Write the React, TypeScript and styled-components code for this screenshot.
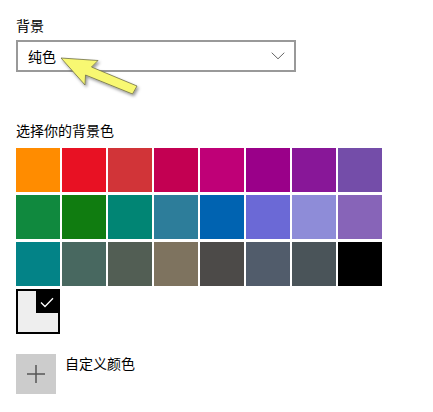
import React from "react";
import styled, { createGlobalStyle } from "styled-components";

const GlobalStyle = createGlobalStyle`
  html, body { margin: 0; padding: 0; background: #ffffff; }
  body { font-family: "Noto Sans CJK SC", "Noto Sans", sans-serif; color: #000; }
`;

const Page = styled.div`
  position: relative;
  width: 433px;
  height: 412px;
  box-sizing: border-box;
  padding: 15px 16px 0 16px;
  display: flex;
  flex-direction: column;
  overflow: hidden;
`;

const Label = styled.div<{ $top?: number }>`
  font-size: 14px;
  line-height: 20px;
  margin-top: ${(p) => p.$top ?? 0}px;
`;

const Select = styled.div`
  margin-top: 5px;
  width: 280px;
  height: 32px;
  box-sizing: border-box;
  border: 2px solid #999999;
  display: flex;
  align-items: center;
  justify-content: space-between;
  padding: 0 9px 0 10px;
  font-size: 14px;
  line-height: 20px;
`;

const Grid = styled.div`
  margin-top: 8px;
  display: grid;
  grid-template-columns: repeat(8, 44px);
  grid-auto-rows: 44px;
  column-gap: 2px;
  row-gap: 3px;
`;

const Swatch = styled.div<{ $c: string }>`
  background: ${(p) => p.$c};
`;

const Selected = styled.div`
  position: relative;
  box-sizing: border-box;
  height: 45px;
  border: 2px solid #000;
  background: #eeeeee;
`;

const CheckBox = styled.div`
  position: absolute;
  top: 0;
  right: 0;
  width: 22px;
  height: 22px;
  background: #000;
  display: flex;
  align-items: center;
  justify-content: center;
`;

const CustomRow = styled.div`
  margin-top: 21px;
  display: flex;
  align-items: flex-start;
  gap: 9px;
`;

const PlusButton = styled.div`
  width: 40px;
  height: 40px;
  background: #cccccc;
  display: flex;
  align-items: center;
  justify-content: center;
`;

const CustomText = styled.div`
  font-size: 14px;
  line-height: 20px;
  margin-top: -1px;
`;

const ArrowOverlay = styled.svg`
  position: absolute;
  left: 0;
  top: 0;
  width: 433px;
  height: 412px;
  pointer-events: none;
  overflow: visible;
`;

const colors = [
  "#FF8C00", "#E81123", "#D13438", "#C30052", "#BF0077", "#9A0089", "#881798", "#744DA9",
  "#10893E", "#107C10", "#018574", "#2D7D9A", "#0063B1", "#6B69D6", "#8E8CD8", "#8764B8",
  "#038387", "#486860", "#525E54", "#7E735F", "#4C4A48", "#515C6B", "#4A5459", "#000000",
];

export default function App() {
  return (
    <>
      <GlobalStyle />
      <Page>
        <Label>背景</Label>
        <Select>
          <span>纯色</span>
          <svg width="14" height="8" viewBox="0 0 14 8">
            <path d="M0.7 0.7 L7 6.8 L13.3 0.7" fill="none" stroke="#666" strokeWidth="1" />
          </svg>
        </Select>
        <Label $top={48}>选择你的背景色</Label>
        <Grid>
          {colors.map((c) => (
            <Swatch key={c} $c={c} />
          ))}
          <Selected>
            <CheckBox>
              <svg width="14" height="11" viewBox="0 0 14 11">
                <path d="M1 5.5 L5 9.5 L13 1.2" fill="none" stroke="#fff" strokeWidth="1.3" />
              </svg>
            </CheckBox>
          </Selected>
        </Grid>
        <CustomRow>
          <PlusButton>
            <svg width="18" height="18" viewBox="0 0 18 18">
              <path d="M9 0 V18 M0 9 H18" stroke="#555" strokeWidth="1.5" />
            </svg>
          </PlusButton>
          <CustomText>自定义颜色</CustomText>
        </CustomRow>
        <ArrowOverlay viewBox="0 0 433 412">
          <defs>
            <filter id="sh" x="-20%" y="-20%" width="150%" height="160%">
              <feDropShadow dx="1.5" dy="2" stdDeviation="1.6" floodColor="#000" floodOpacity="0.4" />
            </filter>
          </defs>
          <path
            d="M61 58 L98 60.5 L91.5 67 L137 86 L132.5 94 L85.5 75 L85 85 Z"
            fill="#F8F872"
            stroke="#6f6f48"
            strokeWidth="0.8"
            strokeLinejoin="round"
            filter="url(#sh)"
          />
        </ArrowOverlay>
      </Page>
    </>
  );
}
